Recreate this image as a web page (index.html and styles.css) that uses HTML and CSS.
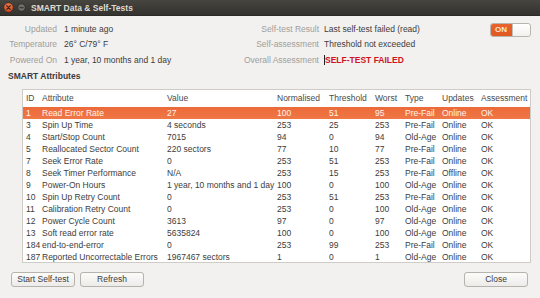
FILE: index.html
```html
<!DOCTYPE html>
<html lang="en">
<head>
<meta charset="utf-8">
<title>SMART Data &amp; Self-Tests</title>
<link rel="stylesheet" href="styles.css">
</head>
<body>
<div class="window">
  <header class="titlebar">
    <span class="wbtns">
      <svg class="wbtn" width="11" height="11" viewBox="0 0 11 11" aria-hidden="true">
        <defs>
          <linearGradient id="cg" x1="0" y1="0" x2="0" y2="1">
            <stop offset="0" stop-color="#f2764a"/>
            <stop offset="1" stop-color="#d9461c"/>
          </linearGradient>
        </defs>
        <circle cx="5.5" cy="5.5" r="4.8" fill="url(#cg)" stroke="#2a2925" stroke-width="0.8"/>
        <path d="M3.7 3.7 L7.3 7.3 M7.3 3.7 L3.7 7.3" stroke="#3a2a22" stroke-width="1.2" stroke-linecap="round"/>
      </svg>
      <svg class="wbtn" width="9" height="9" viewBox="0 0 9 9" aria-hidden="true">
        <circle cx="4.5" cy="4.5" r="3.8" fill="#6e6d68" stroke="#2a2925" stroke-width="0.7"/>
        <path d="M2.8 4.6 H6.2" stroke="#3b3a36" stroke-width="1.1" stroke-linecap="round"/>
      </svg>
    </span>
    <span class="title">SMART Data &amp; Self-Tests</span>
  </header>

  <main class="content">
    <div class="info">
      <span class="lbl">Updated</span>
      <span class="val">1 minute ago</span>
      <span class="lbl">Self-test Result</span>
      <span class="val val2">Last self-test failed (read)</span>
      <div class="switch"><span class="on">ON</span><span class="knob"></span></div>

      <span class="lbl">Temperature</span>
      <span class="val">26° C/79° F</span>
      <span class="lbl">Self-assessment</span>
      <span class="val val2">Threshold not exceeded</span>
      <span class="blank"></span>

      <span class="lbl">Powered On</span>
      <span class="val">1 year, 10 months and 1 day</span>
      <span class="lbl">Overall Assessment</span>
      <span class="val val2"><span class="failed">SELF-TEST FAILED</span></span>
      <span class="blank"></span>
    </div>

    <h2 class="section">SMART Attributes</h2>

    <div class="listframe">
      <table class="attrs">
        <colgroup>
          <col class="c-id"><col class="c-attr"><col class="c-val"><col class="c-norm"><col class="c-thr"><col class="c-worst"><col class="c-type"><col class="c-upd"><col class="c-ass">
        </colgroup>
        <thead>
          <tr><th>ID</th><th>Attribute</th><th>Value</th><th>Normalised</th><th>Threshold</th><th>Worst</th><th>Type</th><th>Updates</th><th>Assessment</th></tr>
        </thead>
        <tbody>
          <tr class="sel"><td>1</td><td>Read Error Rate</td><td>27</td><td>100</td><td>51</td><td>95</td><td>Pre-Fail</td><td>Online</td><td>OK</td></tr>
          <tr><td>3</td><td>Spin Up Time</td><td>4 seconds</td><td>253</td><td>25</td><td>253</td><td>Pre-Fail</td><td>Online</td><td>OK</td></tr>
          <tr><td>4</td><td>Start/Stop Count</td><td>7015</td><td>94</td><td>0</td><td>94</td><td>Old-Age</td><td>Online</td><td>OK</td></tr>
          <tr><td>5</td><td>Reallocated Sector Count</td><td>220 sectors</td><td>77</td><td>10</td><td>77</td><td>Pre-Fail</td><td>Online</td><td>OK</td></tr>
          <tr><td>7</td><td>Seek Error Rate</td><td>0</td><td>253</td><td>51</td><td>253</td><td>Pre-Fail</td><td>Online</td><td>OK</td></tr>
          <tr><td>8</td><td>Seek Timer Performance</td><td>N/A</td><td>253</td><td>15</td><td>253</td><td>Pre-Fail</td><td>Offline</td><td>OK</td></tr>
          <tr><td>9</td><td>Power-On Hours</td><td>1 year, 10 months and 1 day</td><td>100</td><td>0</td><td>100</td><td>Old-Age</td><td>Online</td><td>OK</td></tr>
          <tr><td>10</td><td>Spin Up Retry Count</td><td>0</td><td>253</td><td>51</td><td>253</td><td>Pre-Fail</td><td>Online</td><td>OK</td></tr>
          <tr><td>11</td><td>Calibration Retry Count</td><td>0</td><td>253</td><td>0</td><td>100</td><td>Old-Age</td><td>Online</td><td>OK</td></tr>
          <tr><td>12</td><td>Power Cycle Count</td><td>3613</td><td>97</td><td>0</td><td>97</td><td>Old-Age</td><td>Online</td><td>OK</td></tr>
          <tr><td>13</td><td>Soft read error rate</td><td>5635824</td><td>100</td><td>0</td><td>100</td><td>Old-Age</td><td>Online</td><td>OK</td></tr>
          <tr><td>184</td><td>end-to-end-error</td><td>0</td><td>253</td><td>99</td><td>253</td><td>Pre-Fail</td><td>Online</td><td>OK</td></tr>
          <tr><td>187</td><td>Reported Uncorrectable Errors</td><td>1967467 sectors</td><td>1</td><td>0</td><td>1</td><td>Old-Age</td><td>Online</td><td>OK</td></tr>
        </tbody>
      </table>
    </div>
  </main>

  <footer class="buttons">
    <button class="btn">Start Self-test</button>
    <button class="btn">Refresh</button>
    <button class="btn btn-close">Close</button>
  </footer>
</div>
</body>
</html>
```
FILE: styles.css
```css
html, body {
  margin: 0;
  padding: 0;
}
body {
  background: #f2f1f0;
  font-family: "Liberation Sans", Arial, sans-serif;
  font-size: 8.5px;
  color: #3c3c3c;
}
.window {
  width: 540px;
  height: 298px;
  display: flex;
  flex-direction: column;
  overflow: hidden;
  background: #f2f1f0;
}
.titlebar {
  height: 16px;
  flex: none;
  display: flex;
  align-items: center;
  background: linear-gradient(#46453f, #3a3935 60%, #34332f);
  color: #dfdbd2;
  font-weight: bold;
  box-sizing: border-box;
  border-bottom: 1px solid #2b2a27;
}
.wbtns {
  display: flex;
  align-items: center;
  gap: 3px;
  padding-left: 3px;
  width: 28px;
}
.wbtn {
  display: block;
}
.content {
  flex: none;
  padding: 5px 9px 0 8px;
}
.info {
  display: grid;
  grid-template-columns: 49px 186px 76px 1fr 41px;
  grid-auto-rows: 15.5px;
  align-items: center;
  white-space: nowrap;
}
.lbl {
  text-align: right;
  color: #a09e99;
}
.val {
  padding-left: 7px;
  color: #3c3c3c;
}
.val2 {
  padding-left: 5px;
}
.failed {
  color: #cf1322;
  font-weight: bold;
  border-left: 1px solid #222;
}
.switch {
  display: flex;
  height: 14px;
  box-sizing: border-box;
  border: 1px solid #b8b4ae;
  border-radius: 3px;
  overflow: hidden;
  align-self: start;
  margin-top: 2px;
}
.switch .on {
  flex: 0 0 21px;
  background: linear-gradient(#e9622d, #e0581f);
  color: #fbe3d6;
  font-weight: bold;
  font-size: 8px;
  line-height: 12px;
  padding-left: 4px;
  box-sizing: border-box;
}
.switch .knob {
  flex: 1;
  background: linear-gradient(#ffffff, #f2f1ef);
  border-left: 1px solid #c2beb8;
  border-radius: 0 2px 2px 0;
}
.section {
  margin: 0 0 5.5px 0;
  font-size: 8.5px;
  font-weight: bold;
  line-height: 16px;
  height: 16px;
  color: #3c3c3c;
}
.listframe {
  margin-left: 14px;
  height: 174px;
  box-sizing: border-box;
  border: 1px solid #cfccc7;
  background: #ffffff;
  overflow: hidden;
}
.attrs {
  width: 100%;
  border-collapse: collapse;
  table-layout: fixed;
}
.c-id { width: 16px; }
.c-attr { width: 125px; }
.c-val { width: 110px; }
.c-norm { width: 52px; }
.c-thr { width: 46px; }
.c-worst { width: 30px; }
.c-type { width: 37px; }
.c-upd { width: 39px; }
.c-ass { width: auto; }
.attrs th,
.attrs td {
  padding: 0 0 0 3px;
  text-align: left;
  white-space: nowrap;
  overflow: visible;
}
.attrs th {
  height: 17px;
  font-weight: normal;
  color: #4a4a4a;
  line-height: 17px;
}
.attrs td {
  height: 12px;
  line-height: 12px;
  color: #3c3c3c;
}
.attrs tr.sel td {
  background: linear-gradient(#ec6a39, #f07746);
  color: #fff4ee;
}
.buttons {
  flex: none;
  display: flex;
  gap: 5px;
  padding: 0 12px 0 11px;
  margin-top: 9px;
}
.btn {
  width: 64px;
  height: 15px;
  box-sizing: border-box;
  padding: 0;
  border: 1px solid #b6b2ac;
  border-radius: 3px;
  background: linear-gradient(#fcfcfb, #ecebe9);
  font-family: "Liberation Sans", Arial, sans-serif;
  font-size: 8.5px;
  color: #3c3c3c;
  line-height: 13px;
}
.btn-close {
  margin-left: auto;
}
```
